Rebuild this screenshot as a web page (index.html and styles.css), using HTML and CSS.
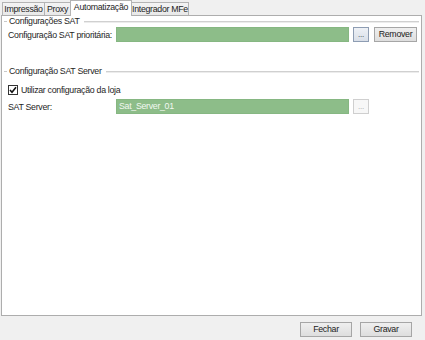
FILE: index.html
```html
<!DOCTYPE html>
<html lang="pt">
<head>
<meta charset="utf-8">
<title>Automatização</title>
<link rel="stylesheet" href="styles.css">
</head>
<body>
<div class="window">
  <div class="tabs">
    <div class="tab tab-impressao">Impressão</div>
    <div class="tab tab-proxy">Proxy</div>
    <div class="tab tab-auto active">Automatização</div>
    <div class="tab tab-mfe">Integrador MFe</div>
  </div>
  <div class="panel">
    <div class="group-head">
      <span class="tick"></span>
      <span class="legend">Configurações SAT</span>
      <span class="rule"></span>
    </div>
    <div class="row">
      <span class="label">Configuração SAT prioritária:</span>
      <div class="field"></div>
      <button class="dots">...</button>
      <button class="btn remover">Remover</button>
    </div>
    <div class="group-head second">
      <span class="tick"></span>
      <span class="legend">Configuração SAT Server</span>
      <span class="rule"></span>
    </div>
    <div class="check-row">
      <span class="checkbox">
        <svg width="8" height="8" viewBox="0 0 8 8"><path d="M1 4 L3 6.2 L7 1.2" fill="none" stroke="#111" stroke-width="1.6"/></svg>
      </span>
      <span class="check-label">Utilizar configuração da loja</span>
    </div>
    <div class="row server-row">
      <span class="label">SAT Server:</span>
      <div class="field">Sat_Server_01</div>
      <button class="dots disabled">...</button>
    </div>
  </div>
  <div class="footer">
    <button class="btn action">Fechar</button>
    <button class="btn action">Gravar</button>
  </div>
</div>
</body>
</html>
```
FILE: styles.css
```css
* { box-sizing: border-box; }

body {
  margin: 0;
  width: 425px;
  height: 340px;
  overflow: hidden;
  background: #f0f0f0;
  font-family: "Liberation Sans", Arial, sans-serif;
  font-size: 8.8px;
  letter-spacing: -0.3px;
  color: #1e1e1e;
}

.tabs {
  display: flex;
  align-items: flex-end;
  height: 15px;
  padding-left: 2px;
  position: relative;
  z-index: 1;
}

.tab {
  height: 13px;
  margin-left: -1px;
  border: 1px solid #b4b4b4;
  border-bottom: none;
  background: linear-gradient(#f4f4f4, #e8e8e8);
  display: flex;
  align-items: center;
  justify-content: center;
  line-height: 1;
  white-space: nowrap;
}
.tab:first-child { margin-left: 0; }
.tab-impressao { width: 43px; }
.tab-proxy { width: 27px; }
.tab-auto { width: 62px; }
.tab-mfe { width: 58px; }

.tab.active {
  height: 16px;
  margin-bottom: -1px;
  background: #fff;
  padding-bottom: 2px;
}

.panel {
  margin-left: 1px;
  width: 421px;
  height: 301px;
  border: 1px solid #adadad;
  background: #fff;
  padding: 0 2px;
}

.group-head {
  display: flex;
  align-items: center;
  height: 11px;
}
.group-head.second { margin-top: 24px; }
.tick {
  width: 3px;
  height: 1px;
  background: #c8c8c8;
}
.legend {
  margin-left: 2px;
  line-height: 1;
  white-space: nowrap;
}
.rule {
  flex: 1;
  height: 2px;
  margin-left: 4px;
  border-top: 1px solid #d0d0d0;
  border-bottom: 1px solid #ececec;
}

.row {
  display: flex;
  align-items: center;
  height: 15px;
  padding-left: 4px;
}
.server-row { margin-top: 4px; }

.label {
  width: 108px;
  white-space: nowrap;
}

.field {
  width: 233px;
  height: 15px;
  background: #8dbd89;
  border: 1px solid #86b782;
  color: #f2f8f1;
  padding-left: 2px;
  line-height: 13px;
}

button {
  font: inherit;
  letter-spacing: inherit;
  margin: 0;
  padding: 0;
  line-height: 1;
}

.dots {
  width: 16px;
  height: 15px;
  margin-left: 4px;
  border: 1px solid #8e9db3;
  background: linear-gradient(#eef1f6, #d9dfe8);
  color: #333;
  font-size: 8px;
}
.dots.disabled {
  border-color: #cfcfcf;
  background: #f7f7f7;
  color: #a8a8a8;
}

.btn {
  height: 15px;
  border: 1px solid #a6a6a6;
  background: linear-gradient(#efefef, #dedede);
  color: #222;
}
.remover {
  width: 43px;
  margin-left: 5px;
}

.check-row {
  display: flex;
  align-items: center;
  height: 10px;
  margin-top: 8px;
  padding-left: 4px;
}
.checkbox {
  width: 10px;
  height: 10px;
  border: 1px solid #333;
  background: #fff;
  display: flex;
  align-items: center;
  justify-content: center;
}
.check-label { margin-left: 3px; }

.footer {
  display: flex;
  justify-content: flex-end;
  gap: 8px;
  margin-top: 6px;
  padding-right: 13px;
}
.action { width: 52px; }
```
